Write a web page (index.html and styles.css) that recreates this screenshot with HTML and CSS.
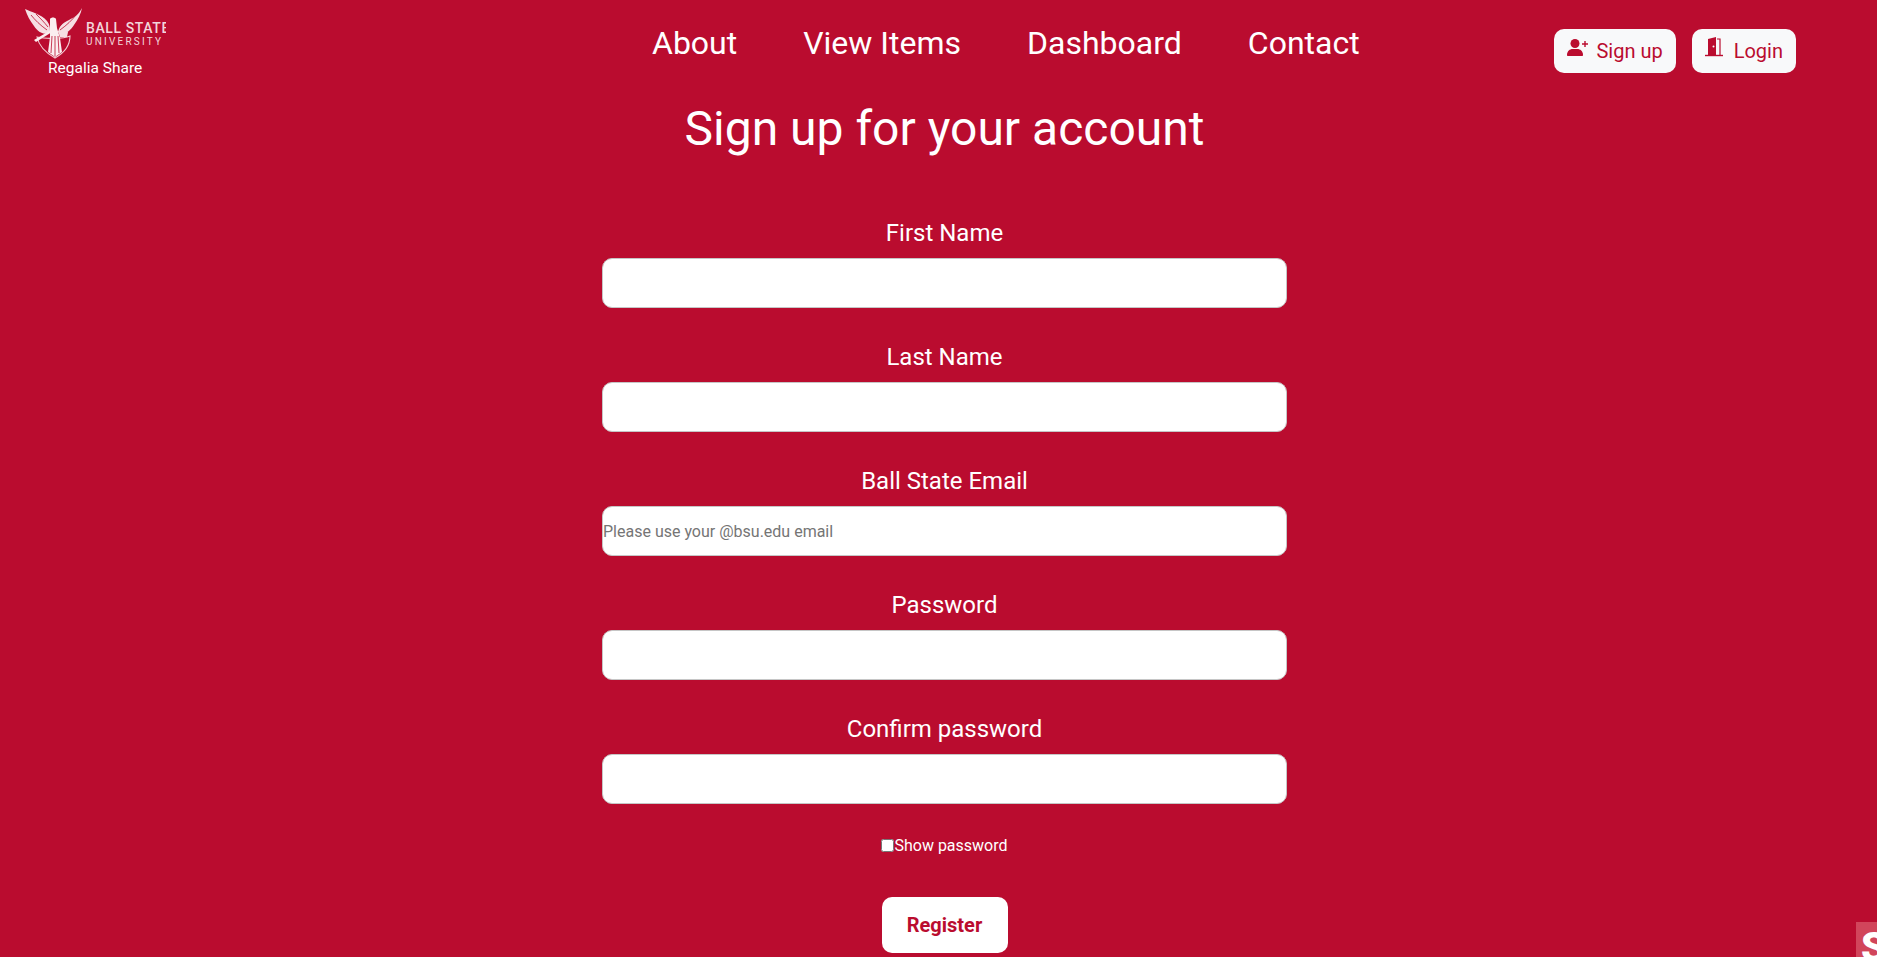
FILE: index.html
```html
<!DOCTYPE html>
<html lang="en">
  <head>
    <title>Regalia Share - Sign up</title>
    <meta charset="utf-8">
    <link rel="stylesheet" href="styles.css">
  </head>
  <body>
    <header class="topbar">
      <a class="brand" href="#">
        <span class="brand-logo">
          <svg class="eagle" width="60" height="52" viewBox="0 0 60 52">
            <path d="M0 1 C6 4 16 6 22 13 C25 17 25 20 25 23 L22 26 C17 26 12 23 9 18 C5 13 2 7 0 1 Z" fill="#f6dfe3"/>
            <path d="M57 0 C54 6 50 9 44 12 C37 15 34 19 33 24 L36 27 C41 26 46 22 49 17 C53 11 56 6 57 0 Z" fill="#f6dfe3"/>
            <path d="M6 7 C10 12 15 17 22 22 M11 6 C15 10 19 14 23 19 M51 7 C47 12 42 17 35 22 M46 7 C42 10 38 14 35 18" fill="none" stroke="#ba0c2f" stroke-width="0.8"/>
            <path d="M12 29 C20 31 38 31 45 28 C45 37 39 45 30 50 C21 45 14 38 12 29 Z" fill="none" stroke="#f3ccd3" stroke-width="1.100"/>
            <path d="M25 11 C26 9 30 9 31 11 L32 20 L35 30 L37 44 L30 49 L23 44 L25 29 Z" fill="#fbeef0"/>
            <path d="M9 32 L26 22 L27 24 L11 34 Z" fill="#fbeef0"/>
            <path d="M33 23 L43 24 L42 29 L35 29 Z" fill="#f6dfe3"/>
            <path d="M27 28 L26 45 M30 28 L30 48 M33 28 L34 45" stroke="#ba0c2f" stroke-width="0.8"/>
          </svg>
          <span class="wordmark">
            <span class="wordmark-top">BALL STATE</span>
            <span class="wordmark-bottom">UNIVERSITY</span>
          </span>
        </span>
        <span class="brand-name">Regalia Share</span>
      </a>
      <nav class="mainnav">
        <a href="#">About</a>
        <a href="#">View Items</a>
        <a href="#">Dashboard</a>
        <a href="#">Contact</a>
      </nav>
      <div class="authlinks">
        <a class="authbtn authbtn-signup" href="#">
          <svg width="22" height="17" viewBox="0 0 22 17">
            <circle cx="8" cy="4.500" r="4.500" fill="#ba0c2f"/>
            <path d="M0 16 C0 12 3 10 5.500 10 L10.500 10 C13 10 16 12 16 16 C16 16.600 15.600 17 15 17 L1 17 C0.400 17 0 16.600 0 16 Z" fill="#ba0c2f"/>
            <path d="M18 2 V8 M15 5 H21" stroke="#ba0c2f" stroke-width="1.400"/>
          </svg>
          Sign up
        </a>
        <a class="authbtn authbtn-login" href="#">
          <svg width="18" height="20" viewBox="0 0 18 20">
            <path d="M3 18 V2 L11 0 V18 Z" fill="#ba0c2f"/>
            <path d="M12 2 H15 V18" fill="none" stroke="#ba0c2f" stroke-width="1.200"/>
            <path d="M0 18.500 H18" stroke="#ba0c2f" stroke-width="1.400"/>
            <circle cx="8.500" cy="9.500" r="1" fill="#f8f9fa"/>
          </svg>
          Login
        </a>
      </div>
    </header>

    <main class="signup">
      <h1>Sign up for your account</h1>
      <form class="signup-form">
        <div class="field">
          <label for="first">First Name</label>
          <input id="first" type="text">
        </div>
        <div class="field">
          <label for="last">Last Name</label>
          <input id="last" type="text">
        </div>
        <div class="field">
          <label for="email">Ball State Email</label>
          <input id="email" type="email" placeholder="Please use your @bsu.edu email">
        </div>
        <div class="field">
          <label for="pass">Password</label>
          <input id="pass" type="password">
        </div>
        <div class="field">
          <label for="confirm">Confirm password</label>
          <input id="confirm" type="password">
        </div>
        <label class="showpass"><input type="checkbox">Show password</label>
        <button class="register" type="button">Register</button>
      </form>
    </main>

    <div class="corner-badge">S</div>
  </body>
</html>
```

FILE: styles.css
```css
html {
  height: 100%;
}
body {
  margin: 0;
  height: 957px;
  overflow: hidden;
  background: #ba0c2f;
  color: #ffffff;
  font-family: Roboto, "Liberation Sans", sans-serif;
}
a {
  color: inherit;
  text-decoration: none;
}
.topbar {
  display: flex;
  align-items: flex-start;
  height: 85px;
}
.brand {
  display: flex;
  flex-direction: column;
  width: 166px;
  padding-left: 25px;
  flex-shrink: 0;
}
.brand-logo {
  display: flex;
  align-items: flex-start;
  height: 58px;
  padding-top: 8px;
  box-sizing: border-box;
}
.eagle {
  flex-shrink: 0;
}
.wordmark {
  display: flex;
  flex-direction: column;
  margin: 13px 0 0 1px;
  width: 80px;
  overflow: hidden;
  white-space: nowrap;
  color: #f3d5da;
}
.wordmark-top {
  font-size: 14px;
  font-weight: 500;
  letter-spacing: 0.600px;
  line-height: 15px;
}
.wordmark-bottom {
  font-size: 10px;
  letter-spacing: 2.200px;
  line-height: 12px;
}
.brand-name {
  font-size: 15.500px;
  line-height: 20px;
  padding-left: 23px;
}
.mainnav {
  display: flex;
  gap: 66px;
  margin-left: 461px;
  padding-top: 24px;
  font-size: 32px;
  line-height: 38px;
}
.authlinks {
  display: flex;
  gap: 16px;
  margin-left: auto;
  margin-right: 81px;
  padding-top: 29px;
}
.authbtn {
  display: flex;
  align-items: center;
  height: 44px;
  padding: 0 13px;
  background: #f8f9fa;
  border-radius: 10px;
  color: #ba0c2f;
  font-size: 20px;
}
.authbtn-signup {
  gap: 7px;
}
.authbtn-login {
  gap: 11px;
}
.authbtn svg {
  margin-top: -8px;
}
.signup {
  display: flex;
  flex-direction: column;
  align-items: center;
  padding-left: 12px;
}
h1 {
  margin: 15px 0 0;
  font-size: 48px;
  font-weight: 400;
  line-height: 58px;
}
.signup-form {
  display: flex;
  flex-direction: column;
  align-items: center;
  width: 685px;
  margin-top: 61px;
}
.field {
  display: flex;
  flex-direction: column;
  align-items: center;
  width: 100%;
  height: 124px;
}
.field label {
  font-size: 24px;
  line-height: 28px;
  margin-bottom: 11px;
}
.field input {
  width: 100%;
  height: 50px;
  box-sizing: border-box;
  padding: 0;
  border: 1px solid #c6c6c6;
  border-radius: 10px;
  background: #ffffff;
  font-family: inherit;
  font-size: 16px;
}
.field input::placeholder {
  color: #757575;
}
.showpass {
  display: flex;
  align-items: center;
  font-size: 16px;
  line-height: 20px;
  margin-top: -3px;
}
.showpass input {
  width: 13px;
  height: 13px;
  margin: -2px 0 0;
}
.register {
  width: 126px;
  height: 56px;
  margin-top: 41px;
  border: 0;
  border-radius: 10px;
  background: #ffffff;
  color: #ba0c2f;
  font-family: inherit;
  font-size: 20px;
  font-weight: 700;
}
.corner-badge {
  position: absolute;
  right: 0;
  bottom: 0;
  width: 21px;
  height: 35px;
  overflow: hidden;
  padding-left: 5px;
  box-sizing: border-box;
  background: #d1455b;
  color: #ffffff;
  font-size: 40px;
  font-weight: 900;
  line-height: 52px;
}
```
